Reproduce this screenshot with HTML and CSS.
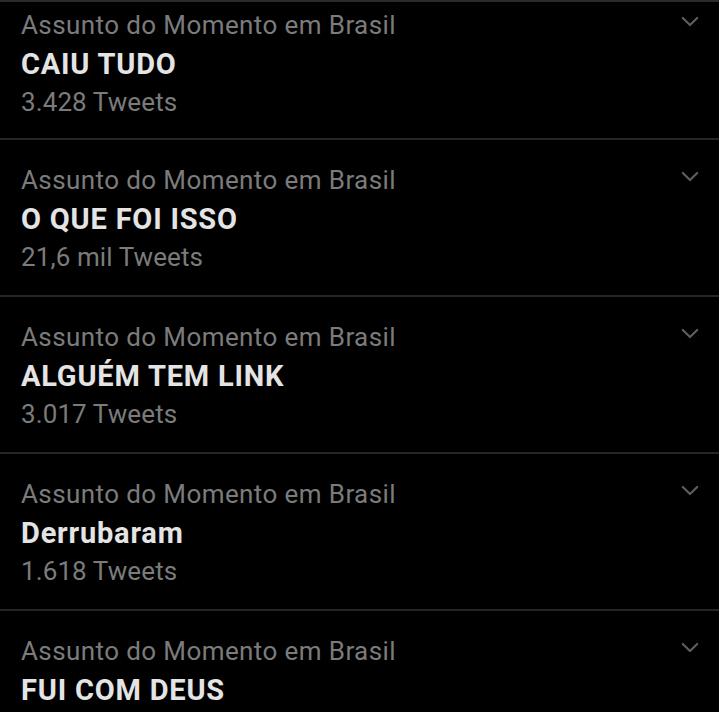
FILE: index.html
```html
<!DOCTYPE html>
<html lang="pt-BR">
<head>
<meta charset="utf-8">
<title>Assuntos do Momento</title>
<link rel="stylesheet" href="styles.css">
</head>
<body>
<ul class="trends">
  <li class="trend trend--first">
    <div class="trend__text">
      <span class="trend__context">Assunto do Momento em Brasil</span>
      <span class="trend__title">CAIU TUDO</span>
      <span class="trend__count">3.428 Tweets</span>
    </div>
    <svg class="trend__more" viewBox="0 0 20 12" aria-hidden="true"><polyline points="2,2 10,10 18,2"/></svg>
  </li>
  <li class="trend">
    <div class="trend__text">
      <span class="trend__context">Assunto do Momento em Brasil</span>
      <span class="trend__title">O QUE FOI ISSO</span>
      <span class="trend__count">21,6 mil Tweets</span>
    </div>
    <svg class="trend__more" viewBox="0 0 20 12" aria-hidden="true"><polyline points="2,2 10,10 18,2"/></svg>
  </li>
  <li class="trend">
    <div class="trend__text">
      <span class="trend__context">Assunto do Momento em Brasil</span>
      <span class="trend__title">ALGUÉM TEM LINK</span>
      <span class="trend__count">3.017 Tweets</span>
    </div>
    <svg class="trend__more" viewBox="0 0 20 12" aria-hidden="true"><polyline points="2,2 10,10 18,2"/></svg>
  </li>
  <li class="trend">
    <div class="trend__text">
      <span class="trend__context">Assunto do Momento em Brasil</span>
      <span class="trend__title">Derrubaram</span>
      <span class="trend__count">1.618 Tweets</span>
    </div>
    <svg class="trend__more" viewBox="0 0 20 12" aria-hidden="true"><polyline points="2,2 10,10 18,2"/></svg>
  </li>
  <li class="trend">
    <div class="trend__text">
      <span class="trend__context">Assunto do Momento em Brasil</span>
      <span class="trend__title">FUI COM DEUS</span>
      <span class="trend__count">2.104 Tweets</span>
    </div>
    <svg class="trend__more" viewBox="0 0 20 12" aria-hidden="true"><polyline points="2,2 10,10 18,2"/></svg>
  </li>
</ul>
</body>
</html>
```
FILE: styles.css
```css
html, body {
  margin: 0;
  padding: 0;
  background: #000;
  height: 100%;
  overflow: hidden;
}

body {
  font-family: Roboto, "Noto Sans", "Liberation Sans", sans-serif;
  color: #7b7b7b;
}

.trends {
  list-style: none;
  margin: 0;
  padding: 0;
}

.trend {
  display: flex;
  align-items: flex-start;
  border-top: 2px solid #262626;
  padding: 22px 20px 21px 21px;
}

.trend--first {
  padding-top: 5px;
  padding-bottom: 19px;
  border-top-color: #2b2b2b;
}

.trend__text {
  flex: 1;
  display: flex;
  flex-direction: column;
}

.trend__context {
  font-size: 26px;
  line-height: 36px;
  letter-spacing: 0.4px;
  color: #7b7b7b;
}

.trend__title {
  font-size: 29px;
  line-height: 42px;
  letter-spacing: 0.8px;
  font-weight: 700;
  color: #e4e4e4;
}

.trend__count {
  font-size: 26px;
  line-height: 34px;
  letter-spacing: 0.1px;
  color: #7b7b7b;
}

.trend__more {
  width: 18px;
  height: 11px;
  margin-top: 9px;
  fill: none;
  stroke: #5e5e5e;
  stroke-width: 2.4;
  stroke-linecap: round;
  stroke-linejoin: round;
}
```
